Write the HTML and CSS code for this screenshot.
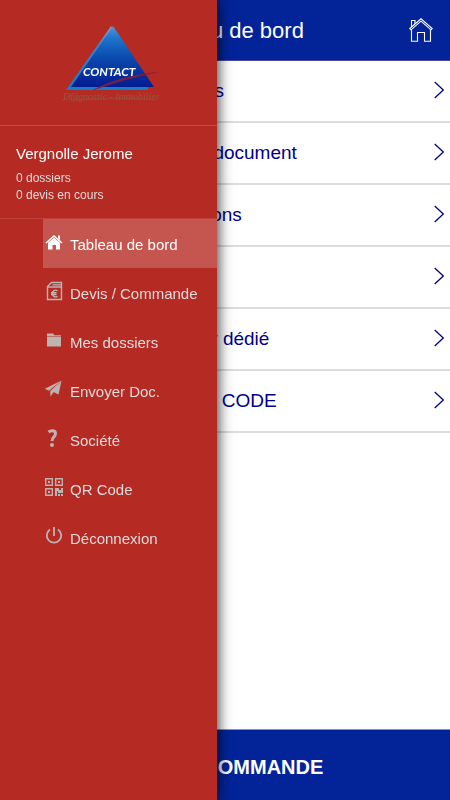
FILE: index.html
```
<!DOCTYPE html>
<html lang="fr">
<head>
<meta charset="utf-8">
<meta name="viewport" content="width=device-width, initial-scale=1">
<title>Tableau de bord</title>
<link rel="stylesheet" href="styles.css">
</head>
<body>
<div class="page">
  <header class="topbar">
    <h1 class="title">Tableau de bord</h1>
    <a class="home" href="#" aria-label="Accueil">
      <svg width="24" height="24" viewBox="0 0 24 24" fill="none" stroke="#fff" stroke-width="1.1"><path d="M.8 10.500 12 .8l11.200 9.700-1.200 1.300L12 3.200 2 11.800z"/><path d="M2.500 9V2.500H6V6M2.500 11.500v11.700h6v-8.700h7v8.700h6V11.500"/></svg>
    </a>
  </header>
  <main class="list">
    <a class="row" href="#"><span>Mes dossiers</span><svg class="chevron" viewBox="0 0 10 18"><path d="M.7 1 9.300 9 .7 17"/></svg></a>
    <a class="row" href="#"><span>Envoyer un document</span><svg class="chevron" viewBox="0 0 10 18"><path d="M.7 1 9.300 9 .7 17"/></svg></a>
    <a class="row" href="#"><span>Mes formations</span><svg class="chevron" viewBox="0 0 10 18"><path d="M.7 1 9.300 9 .7 17"/></svg></a>
    <a class="row" href="#"><span>Société</span><svg class="chevron" viewBox="0 0 10 18"><path d="M.7 1 9.300 9 .7 17"/></svg></a>
    <a class="row" href="#"><span>Interlocuteur dédié</span><svg class="chevron" viewBox="0 0 10 18"><path d="M.7 1 9.300 9 .7 17"/></svg></a>
    <a class="row" href="#"><span>Scanner QR CODE</span><svg class="chevron" viewBox="0 0 10 18"><path d="M.7 1 9.300 9 .7 17"/></svg></a>
  </main>
  <button class="order" type="button">DEVIS / COMMANDE</button>
</div>
<aside class="drawer">
  <div class="brand">
    <svg width="100" height="80" viewBox="0 0 100 80" role="img" aria-label="Contact Diagnostic Immobilier">
      <defs>
        <linearGradient id="face" x1="0" y1="0" x2="0" y2="1"><stop offset="0" stop-color="#4d98df"/><stop offset=".2" stop-color="#1f74cc"/><stop offset=".5" stop-color="#0b4cb0"/><stop offset="1" stop-color="#021c90"/></linearGradient>
        <linearGradient id="edge" x1="0" y1="0" x2="0" y2="1"><stop offset="0" stop-color="#9a92b4"/><stop offset=".3" stop-color="#477fc4"/><stop offset="1" stop-color="#167cc9"/></linearGradient>
      </defs>
      <path d="M52 1 7 65h82v-3z" fill="url(#edge)"/>
      <path d="M54 1 12 62h83z" fill="url(#face)"/>
      <text class="logo-name" x="24" y="51">CONTACT</text>
      <path d="M34 65Q61 51 99 47Q67 53 34 65z" fill="#7a1c48" stroke="#8f2439" stroke-width=".5"/>
      <text class="logo-sub" x="4" y="75">Diagnostic - Immobilier</text>
      <path d="M3 76Q12 68 19 68M10 76Q60 71 96 75" fill="none" stroke="#8f5a42" stroke-width=".5"/>
    </svg>
  </div>
  <section class="user">
    <h2 class="name">Vergnolle Jerome</h2>
    <p class="stat">0 dossiers</p>
    <p class="stat">0 devis en cours</p>
  </section>
  <nav class="menu">
    <a class="item active" href="#"><svg class="icon" viewBox="0 0 20 20" fill="currentColor"><path d="M1.500 10.500 10 3l8.500 7.500-1 1L10 5l-7.500 6.500z"/><path d="m4 10.800 6-5 6 5V17.500h-4V13H8.500v4.500H4zM14 3.500h2V8l-2-1.800z"/></svg><span>Tableau de bord</span></a>
    <a class="item" href="#"><svg class="icon" viewBox="0 0 20 20" fill="none" stroke="currentColor" stroke-width="1.400"><path d="M7.500 1.500h10v17h-14v-13z"/><path d="M4 6h13M8.500 3.800H17" stroke-width="1.300"/><path d="M13.500 9.700c-3-1.500-5 .3-5 2.800s2 4.300 5 2.800M7 11.700h5.500M7 13.500h5.500"/></svg><span>Devis / Commande</span></a>
    <a class="item" href="#"><svg class="icon" viewBox="0 0 20 20" fill="currentColor"><path d="M3 3.500h6l1.500 1.700H17v1.300H3z"/><path d="M3 7h14v9.500H3z"/></svg><span>Mes dossiers</span></a>
    <a class="item" href="#"><svg class="icon" viewBox="0 0 20 20" fill="currentColor"><path d="M17.500 1.500.8 9.700 5 11.700z"/><path d="M17.500 1.500 6.200 12.300l.3 5.200 2.500-3.500z"/><path d="M17.500 1.500 9 12.800l5.500 2.700z"/></svg><span>Envoyer Doc.</span></a>
    <a class="item" href="#"><svg class="icon" viewBox="0 0 20 20" fill="none" stroke="currentColor" stroke-width="3"><path d="M4.500 4C7 2 11.500 2.200 11.500 5.500 11.500 9 8 9 8 13"/><circle cx="8" cy="17" r="2" fill="currentColor" stroke="none"/></svg><span>Société</span></a>
    <a class="item" href="#"><svg class="icon" viewBox="0 0 20 20" fill="none" stroke="currentColor" stroke-width="1.400"><path d="M1.700 1.700h6.600v6.600H1.700zM11.700 1.700h6.600v6.600h-6.600zM1.700 11.700h6.600v6.600H1.700z"/><path fill="currentColor" stroke="none" d="M4 4h2v2H4zM14 4h2v2h-2zM4 14h2v2H4zM11 11h4v2h2v-2h2v5h-5v-2h-1v5h-2zM14 17h2v2h-2zM17 17h2v2h-2z"/></svg><span>QR Code</span></a>
    <a class="item" href="#"><svg class="icon" viewBox="0 0 20 20" fill="none" stroke="currentColor" stroke-width="1.800"><path d="M6 3.500a7.200 7.200 0 1 0 8 0M10 1v9"/></svg><span>Déconnexion</span></a>
  </nav>
</aside>
</body>
</html>
```
FILE: styles.css
```
* {
  box-sizing: border-box;
}

body {
  margin: 0;
  font-family: "Liberation Sans", Arial, sans-serif;
  background: #fff;
}

a {
  color: inherit;
  text-decoration: none;
}

.page {
  display: flex;
  flex-direction: column;
  min-height: 100vh;
}

.topbar {
  display: grid;
  grid-template-columns: 48px 1fr 48px;
  align-items: center;
  height: 61px;
  background: #032499;
  border-bottom: 1px solid #4a48a0;
  color: #fff;
}

.title {
  grid-column: 2;
  margin: 0;
  padding-top: 2px;
  font-size: 22px;
  font-weight: 400;
  text-align: center;
}

.home {
  display: flex;
  padding-left: 7px;
}

.list {
  flex: 1;
}

.row {
  display: flex;
  align-items: center;
  justify-content: space-between;
  height: 62px;
  padding: 0 6px 0 112px;
  border-bottom: 2px solid #dcdcdc;
  color: #00008b;
  font-size: 19px;
}

.chevron {
  width: 10px;
  height: 18px;
  margin-bottom: 2px;
  fill: none;
  stroke: #00008b;
  stroke-width: 1.3;
}

.order {
  height: 71px;
  padding: 4px 0 0;
  border: 0;
  border-top: 1px solid #8a90b8;
  background: #032499;
  color: #fff;
  font: bold 20px "Liberation Sans", Arial, sans-serif;
}

.drawer {
  position: fixed;
  top: 0;
  bottom: 0;
  left: 0;
  width: 217px;
  background: #b52b24;
  box-shadow: 0 0 14px rgba(0, 0, 0, 0.9);
  color: #ddd;
}

.brand {
  display: flex;
  justify-content: center;
  height: 125px;
  padding-top: 25px;
}

.logo-name {
  fill: #fff;
  font: italic bold 12px Lato, sans-serif;
}

.logo-sub {
  fill: #8f5a42;
  font: italic 10px "Liberation Serif", serif;
}

.user {
  height: 94px;
  padding: 19px 16px 0;
  border-top: 1px solid #c9483f;
  border-bottom: 1px solid #c0403a;
}

.name {
  margin: 0 0 7px;
  color: #fff;
  font-size: 15px;
  font-weight: 400;
  line-height: 18px;
}

.stat {
  margin: 0;
  font-size: 12px;
  line-height: 17px;
}

.menu {
  padding-left: 43px;
}

.item {
  display: flex;
  align-items: center;
  gap: 6px;
  height: 49px;
  padding: 1px 0 0 1px;
  font-size: 15px;
}

.icon {
  width: 20px;
  height: 20px;
  margin-bottom: 4px;
  color: #bdb3b0;
}

.active {
  background: #c4564f;
  color: #fff;
}

.active .icon {
  color: #fff;
}
```
